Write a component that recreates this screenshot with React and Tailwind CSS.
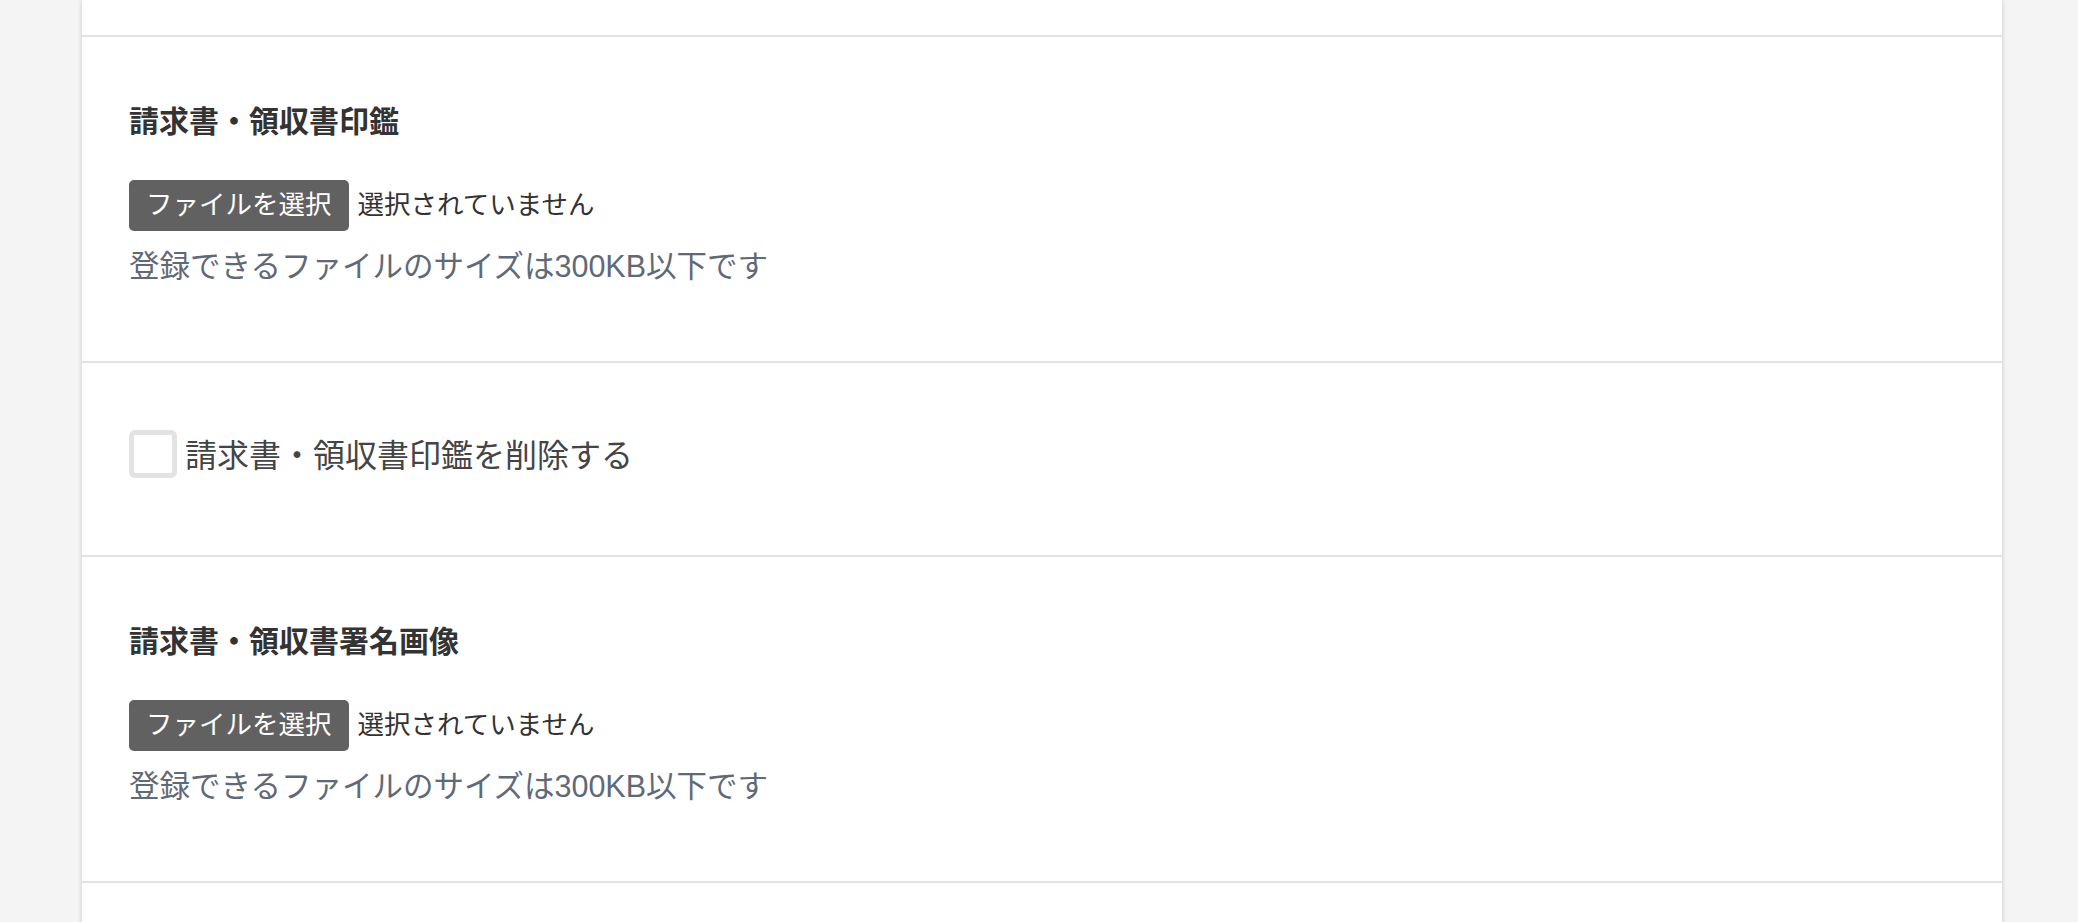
export default function App() {
  const font = { fontFamily: '"Liberation Sans", "Noto Sans CJK JP", sans-serif' };

  const FileSection = ({ title }) => (
    <div className="border-t-2 border-[#e2e2e2] pl-[47px] pr-[47px] pt-[62px] pb-[72px]">
      <div className="text-[30px] leading-[45px] font-bold text-[#333333]">{title}</div>
      <div className="mt-[36px] flex items-center">
        <div className="h-[51px] px-[17px] flex items-center rounded-[5px] bg-[#616161] text-white text-[26.5px] leading-none">
          ファイルを選択
        </div>
        <span className="ml-[9px] text-[26.5px] leading-none text-[#333333]">選択されていません</span>
      </div>
      <div className="mt-[13px] text-[30.5px] leading-[45px] text-[#5f6a79]">
        登録できるファイルのサイズは300KB以下です
      </div>
    </div>
  );

  return (
    <div className="min-h-screen bg-[#f4f4f4] overflow-hidden" style={font}>
      <div className="ml-[82px] w-[1920px] bg-white shadow-[0_0_5px_rgba(0,0,0,0.18)]">
        <div className="h-[35px]" />
        <FileSection title="請求書・領収書印鑑" />
        <div className="border-t-2 border-[#e2e2e2] pl-[47px] pt-[67px] pb-[77px] flex items-center">
          <div className="w-[48px] h-[48px] rounded-[6px] border-[5px] border-[#e3e3e3] bg-white shrink-0" />
          <span className="ml-[8px] mt-[4px] text-[32px] leading-none text-[#444444]">請求書・領収書印鑑を削除する</span>
        </div>
        <FileSection title="請求書・領収書署名画像" />
        <div className="border-t-2 border-[#e2e2e2] h-[60px]" />
      </div>
    </div>
  );
}
